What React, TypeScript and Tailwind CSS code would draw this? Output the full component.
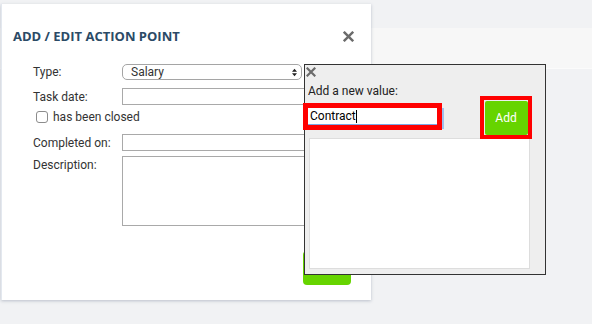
import React from "react";

function XIcon({ className }: { className?: string }) {
  return (
    <svg viewBox="0 0 10 10" className={className}>
      <path d="M1.5 1.5 L8.5 8.5 M8.5 1.5 L1.5 8.5" stroke="currentColor" strokeWidth="2.2" strokeLinecap="square" fill="none" />
    </svg>
  );
}

export default function App() {
  const font = { fontFamily: 'Roboto, "Noto Sans", sans-serif' };
  return (
    <div className="relative w-[592px] h-[324px] overflow-hidden bg-[#f1f2f4]" style={font}>
      {/* background page content */}
      <div className="pt-[28px]">
        <div className="h-[41px] bg-[#f7f7f7] border-b border-[#fbfbfb]" />
      </div>

      {/* modal */}
      <div className="absolute left-[1px] top-[4px] w-[370px] h-[296px] bg-white shadow-[0_1px_3px_rgba(120,130,150,0.45)] border-l border-[#e3e8ef]">
        <div className="flex items-center justify-between pl-[11px] pr-[17px] pt-[20px] h-[44px]">
          <div className="text-[13px] font-bold text-[#2b4a66] leading-none" style={{ fontFamily: '"Open Sans", sans-serif' }}>ADD / EDIT ACTION POINT</div>
          <XIcon className="w-[11px] h-[11px] text-[#6b6b6b]" />
        </div>
        <div className="pl-[31px] pt-[16px] text-[12px] text-[#333] leading-none">
          <div className="flex items-center h-[16px]">
            <div className="w-[89px]">Type:</div>
            <div className="relative w-[180px] h-[16px] rounded-[5px] border border-[#a5a5a5] bg-white flex items-center pl-[8px]">
              Salary
              <svg viewBox="0 0 6 10" className="absolute right-[4px] top-[3px] w-[5px] h-[9px]">
                <path d="M0 4 L3 0.5 L6 4 Z M0 6 L3 9.5 L6 6 Z" fill="#222" />
              </svg>
            </div>
          </div>
          <div className="flex items-center h-[17px] mt-[8px]">
            <div className="w-[89px]">Task date:</div>
            <div className="w-[190px] h-[17px] border border-[#a9a9a9] bg-white" />
          </div>
          <div className="flex items-center h-[12px] mt-[6px]">
            <div className="ml-[3px] w-[12px] h-[12px] rounded-[3px] border border-[#8c8c8c] bg-white" />
            <div className="ml-[5px]">has been closed</div>
          </div>
          <div className="flex items-center h-[17px] mt-[11px]">
            <div className="w-[89px]">Completed on:</div>
            <div className="w-[190px] h-[17px] border border-[#a9a9a9] bg-white" />
          </div>
          <div className="flex items-start h-[70px] mt-[5px]">
            <div className="w-[89px] pt-[3px]">Description:</div>
            <div className="relative w-[190px] h-[70px] border border-[#a9a9a9] bg-white">
              <svg viewBox="0 0 6 6" className="absolute right-[1px] bottom-[1px] w-[6px] h-[6px]">
                <path d="M0 6 L6 0 M3 6 L6 3" stroke="#888" strokeWidth="0.8" />
              </svg>
            </div>
          </div>
        </div>
        <div className="flex justify-end pr-[20px] mt-[25px]">
          <div className="w-[48px] h-[34px] rounded-[4px] bg-[#66d400] text-white text-[12px] flex items-center justify-center">Save</div>
        </div>
      </div>

      {/* add value popup */}
      <div className="absolute left-[304px] top-[64px] w-[242px] h-[211px] border border-[#333] bg-[#eeeeee] text-[12px] text-[#222] leading-none">
        <div className="pl-[1px] pt-[2px] h-[12px]">
          <XIcon className="w-[10px] h-[10px] text-[#6b6b6b]" />
        </div>
        <div className="pl-[3px] mt-[7px] h-[14px] flex items-center">Add a new value:</div>
        <div className="flex items-start mt-[-2px] h-[43px]">
          <div className="ml-[-2px] mt-[7px] flex">
            <div className="w-[139px] h-[27px] border-[5px] border-[#ff0000] bg-white">
              <div className="h-full border-b border-[#7aa7e6] flex items-center pl-[2px] text-black text-[12px]">
                Contract<span className="inline-block w-[1px] h-[13px] bg-black" />
              </div>
            </div>
            <div className="mt-[5px] w-[2px] h-[21px] bg-[#9fc0ee]" />
          </div>
          <div className="ml-[36px] w-[52px] h-[43px] border-[4px] border-[#ff0000] flex items-center justify-center">
            <div className="w-[43px] h-[34px] bg-[#66d400] rounded-[2px] text-white text-[12px] flex items-center justify-center">Add</div>
          </div>
        </div>
        <div className="ml-[4px] mt-[-1px] w-[221px] h-[131px] bg-white border border-[#dddddd]" />
      </div>
    </div>
  );
}
